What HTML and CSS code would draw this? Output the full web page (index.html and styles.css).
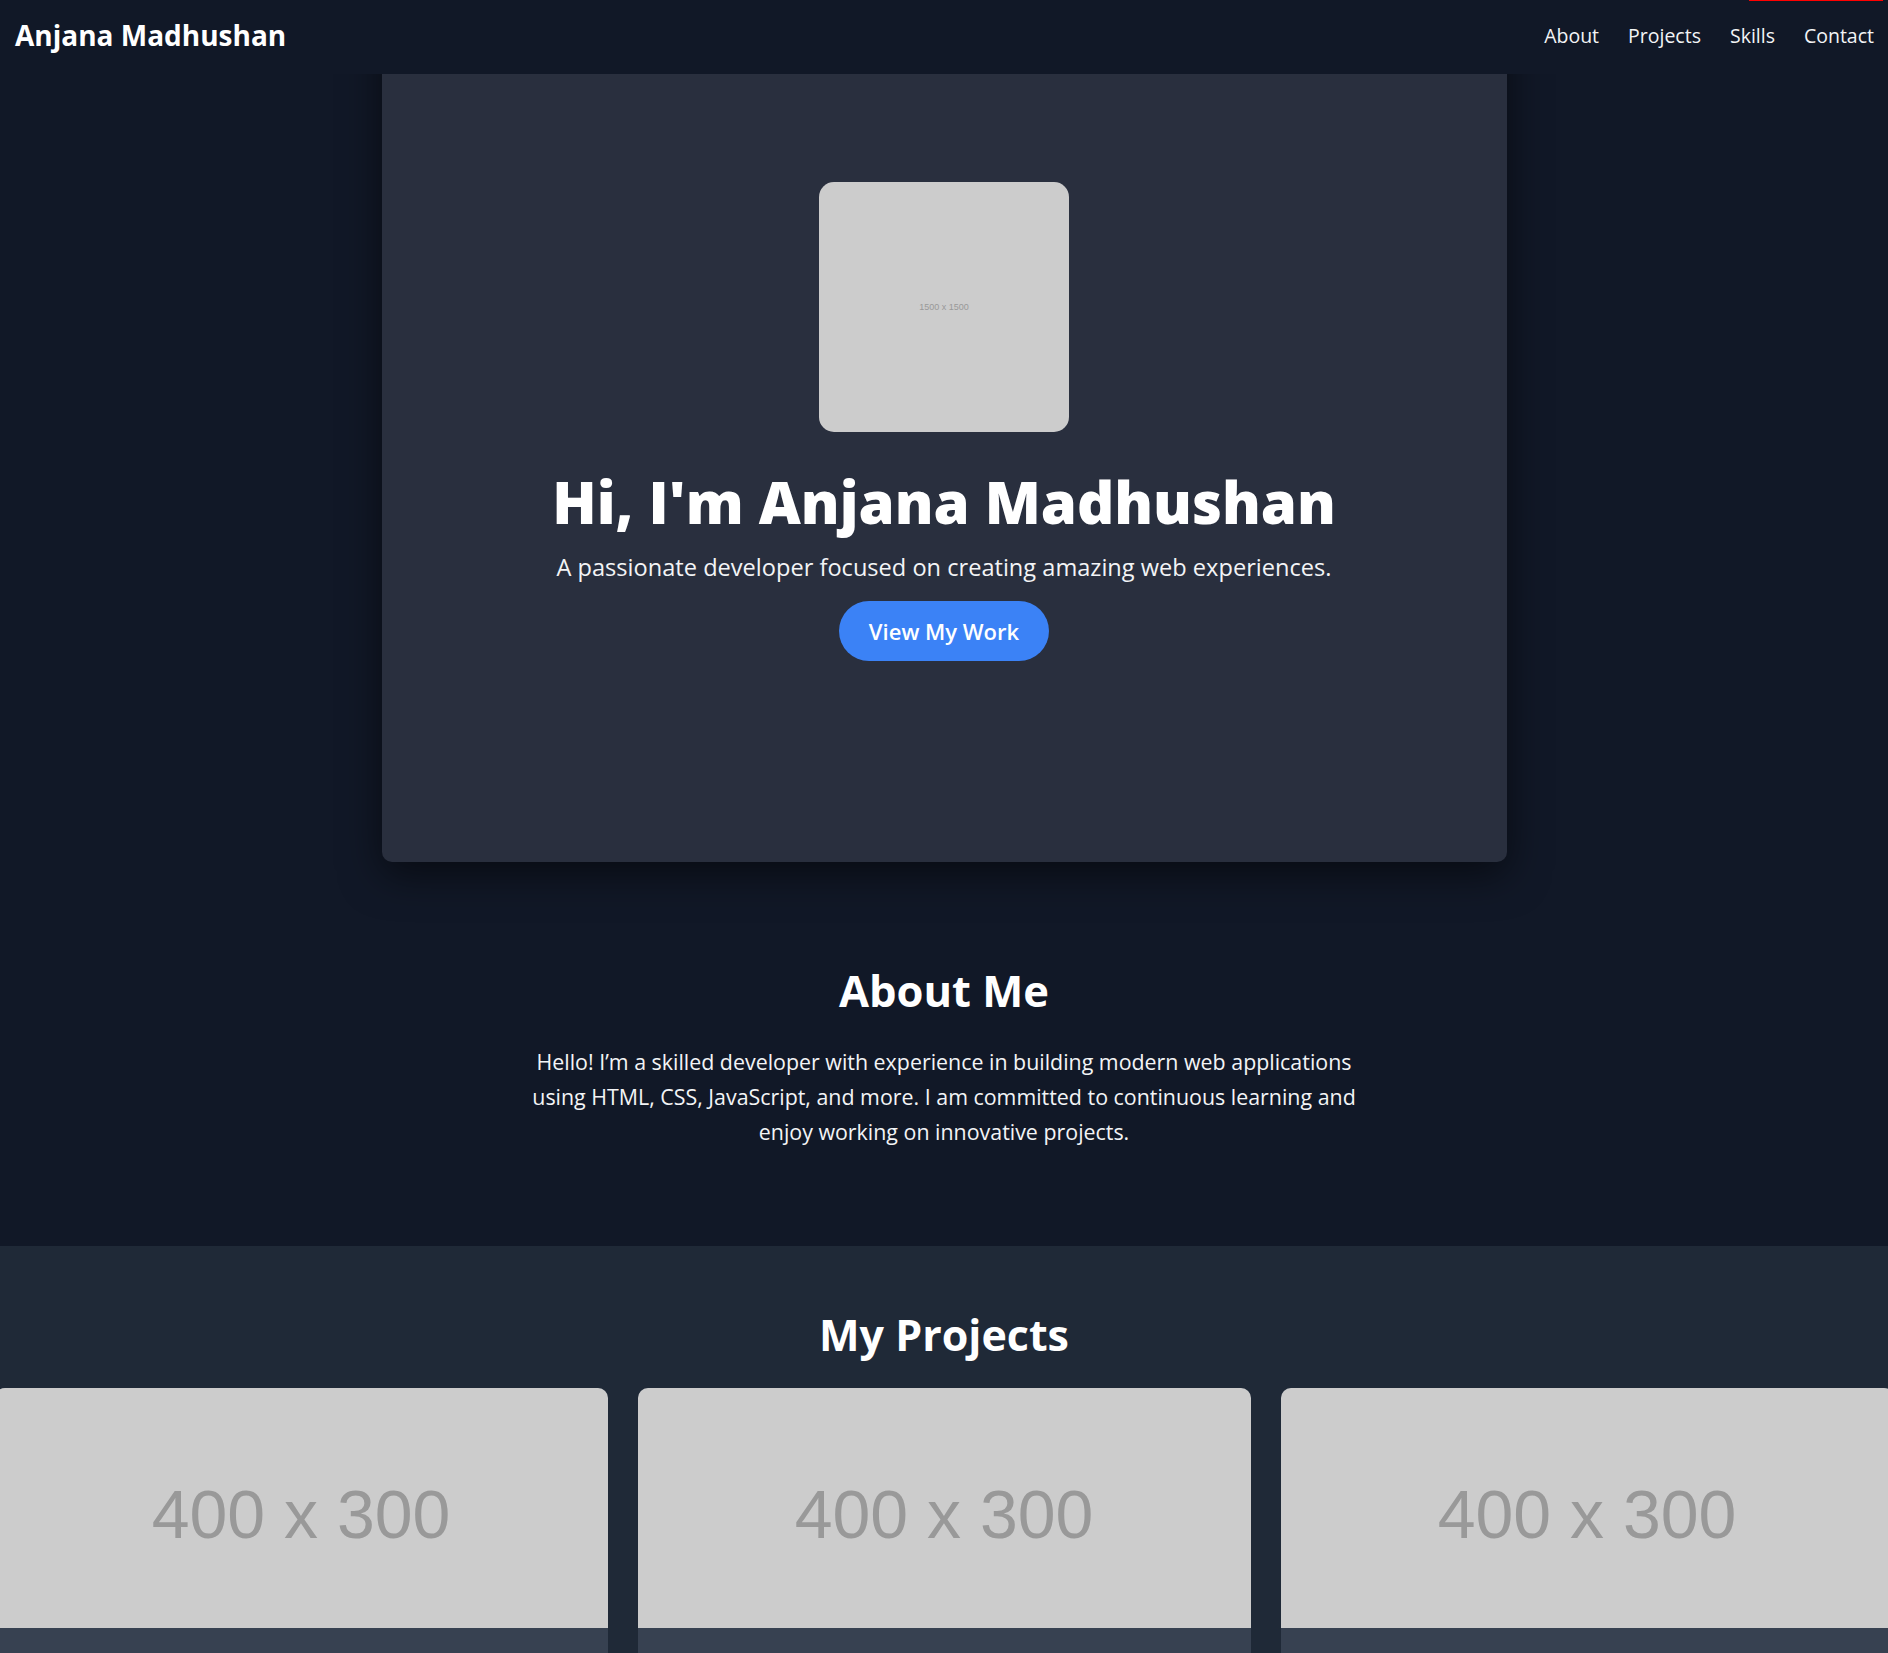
FILE: index.html
```html
<!DOCTYPE html>
<html lang="en">
<head>
<meta charset="UTF-8">
<title>Anjana Madhushan - Portfolio</title>
<link rel="stylesheet" href="styles.css">
</head>
<body>
<div class="progress"></div>
<header class="navbar">
  <div class="logo">Anjana Madhushan</div>
  <nav class="nav-links">
    <a href="#about">About</a>
    <a href="#projects">Projects</a>
    <a href="#skills">Skills</a>
    <a href="#contact">Contact</a>
  </nav>
</header>

<main>
  <section class="hero">
    <div class="hero-card">
      <div class="profile-pic"><span>1500 x 1500</span></div>
      <h1 class="hero-title">Hi, I'm Anjana Madhushan</h1>
      <p class="hero-sub">A passionate developer focused on creating amazing web experiences.</p>
      <a class="btn" href="#projects">View My Work</a>
    </div>
  </section>

  <section class="about" id="about">
    <h2 class="section-title">About Me</h2>
    <p class="about-text">Hello! I’m a skilled developer with experience in building modern web applications using HTML, CSS, JavaScript, and more. I am committed to continuous learning and enjoy working on innovative projects.</p>
  </section>

  <section class="projects" id="projects">
    <h2 class="section-title">My Projects</h2>
    <div class="project-grid">
      <div class="project-card">
        <div class="project-img"><span>400 x 300</span></div>
        <div class="project-body"></div>
      </div>
      <div class="project-card">
        <div class="project-img"><span>400 x 300</span></div>
        <div class="project-body"></div>
      </div>
      <div class="project-card">
        <div class="project-img"><span>400 x 300</span></div>
        <div class="project-body"></div>
      </div>
    </div>
  </section>
</main>
</body>
</html>
```

FILE: styles.css
```css
* { box-sizing: border-box; }

html, body {
  margin: 0;
  padding: 0;
}

body {
  background: #111827;
  color: #f3f4f6;
  font-family: "Segoe UI", "Open Sans", "Noto Sans", sans-serif;
  overflow-x: hidden;
}

.progress {
  position: fixed;
  top: 0;
  left: 1749px;
  width: 134px;
  height: 1px;
  background: #ff0000;
  z-index: 20;
}

.navbar {
  position: fixed;
  top: 0;
  left: 0;
  right: 0;
  height: 74px;
  background: #111827;
  display: flex;
  align-items: center;
  justify-content: space-between;
  padding: 0 14px 4px 15px;
  z-index: 10;
}

.logo {
  font-size: 28px;
  font-weight: 700;
  color: #ffffff;
}

.nav-links {
  display: flex;
  gap: 29px;
}

.nav-links a {
  color: #f3f4f6;
  text-decoration: none;
  font-size: 19.5px;
}

.hero {
  display: flex;
  justify-content: center;
}

.hero-card {
  width: 1125px;
  background: #292f3e;
  border-radius: 10px;
  box-shadow: 0 12px 40px rgba(0, 0, 0, 0.55);
  padding: 182px 20px 201px;
  display: flex;
  flex-direction: column;
  align-items: center;
}

.profile-pic {
  width: 250px;
  height: 250px;
  border-radius: 15px;
  background: #cccccc;
  display: flex;
  align-items: center;
  justify-content: center;
}

.profile-pic span {
  font-family: "Liberation Sans", Arial, sans-serif;
  font-size: 9px;
  color: #999999;
}

.hero-title {
  margin: 34px 0 0;
  font-size: 58px;
  line-height: 72px;
  font-weight: 800;
  color: #ffffff;
}

.hero-sub {
  margin: 16px 0 0;
  font-size: 23.6px;
  line-height: 27px;
  color: #f3f4f6;
}

.btn {
  margin-top: 20px;
  height: 60px;
  padding: 0 30px;
  display: inline-flex;
  align-items: center;
  border-radius: 30px;
  background: #3b82f6;
  color: #ffffff;
  font-size: 22px;
  font-weight: 600;
  text-decoration: none;
}

.section-title {
  margin: 0;
  font-size: 43.5px;
  line-height: 54px;
  font-weight: 700;
  color: #ffffff;
  text-align: center;
}

.projects .section-title {
  font-size: 43px;
}

.about {
  padding: 102px 20px 97px;
  display: flex;
  flex-direction: column;
  align-items: center;
}

.about-text {
  margin: 26px 0 0;
  max-width: 850px;
  font-size: 21.4px;
  line-height: 35px;
  text-align: center;
  color: #f3f4f6;
}

.projects {
  background: #1f2937;
  padding: 62px 0 40px;
}

.project-grid {
  margin-top: 26px;
  display: flex;
  justify-content: center;
  gap: 30px;
}

.project-card {
  flex: 0 0 613px;
  background: #374151;
  border-radius: 10px;
  overflow: hidden;
}

.project-img {
  height: 240px;
  background: #cccccc;
  display: flex;
  align-items: center;
  justify-content: center;
  padding-top: 12px;
}

.project-img span {
  font-family: "Liberation Sans", Arial, sans-serif;
  font-size: 68px;
  color: #999999;
}

.project-body {
  height: 160px;
}
```
